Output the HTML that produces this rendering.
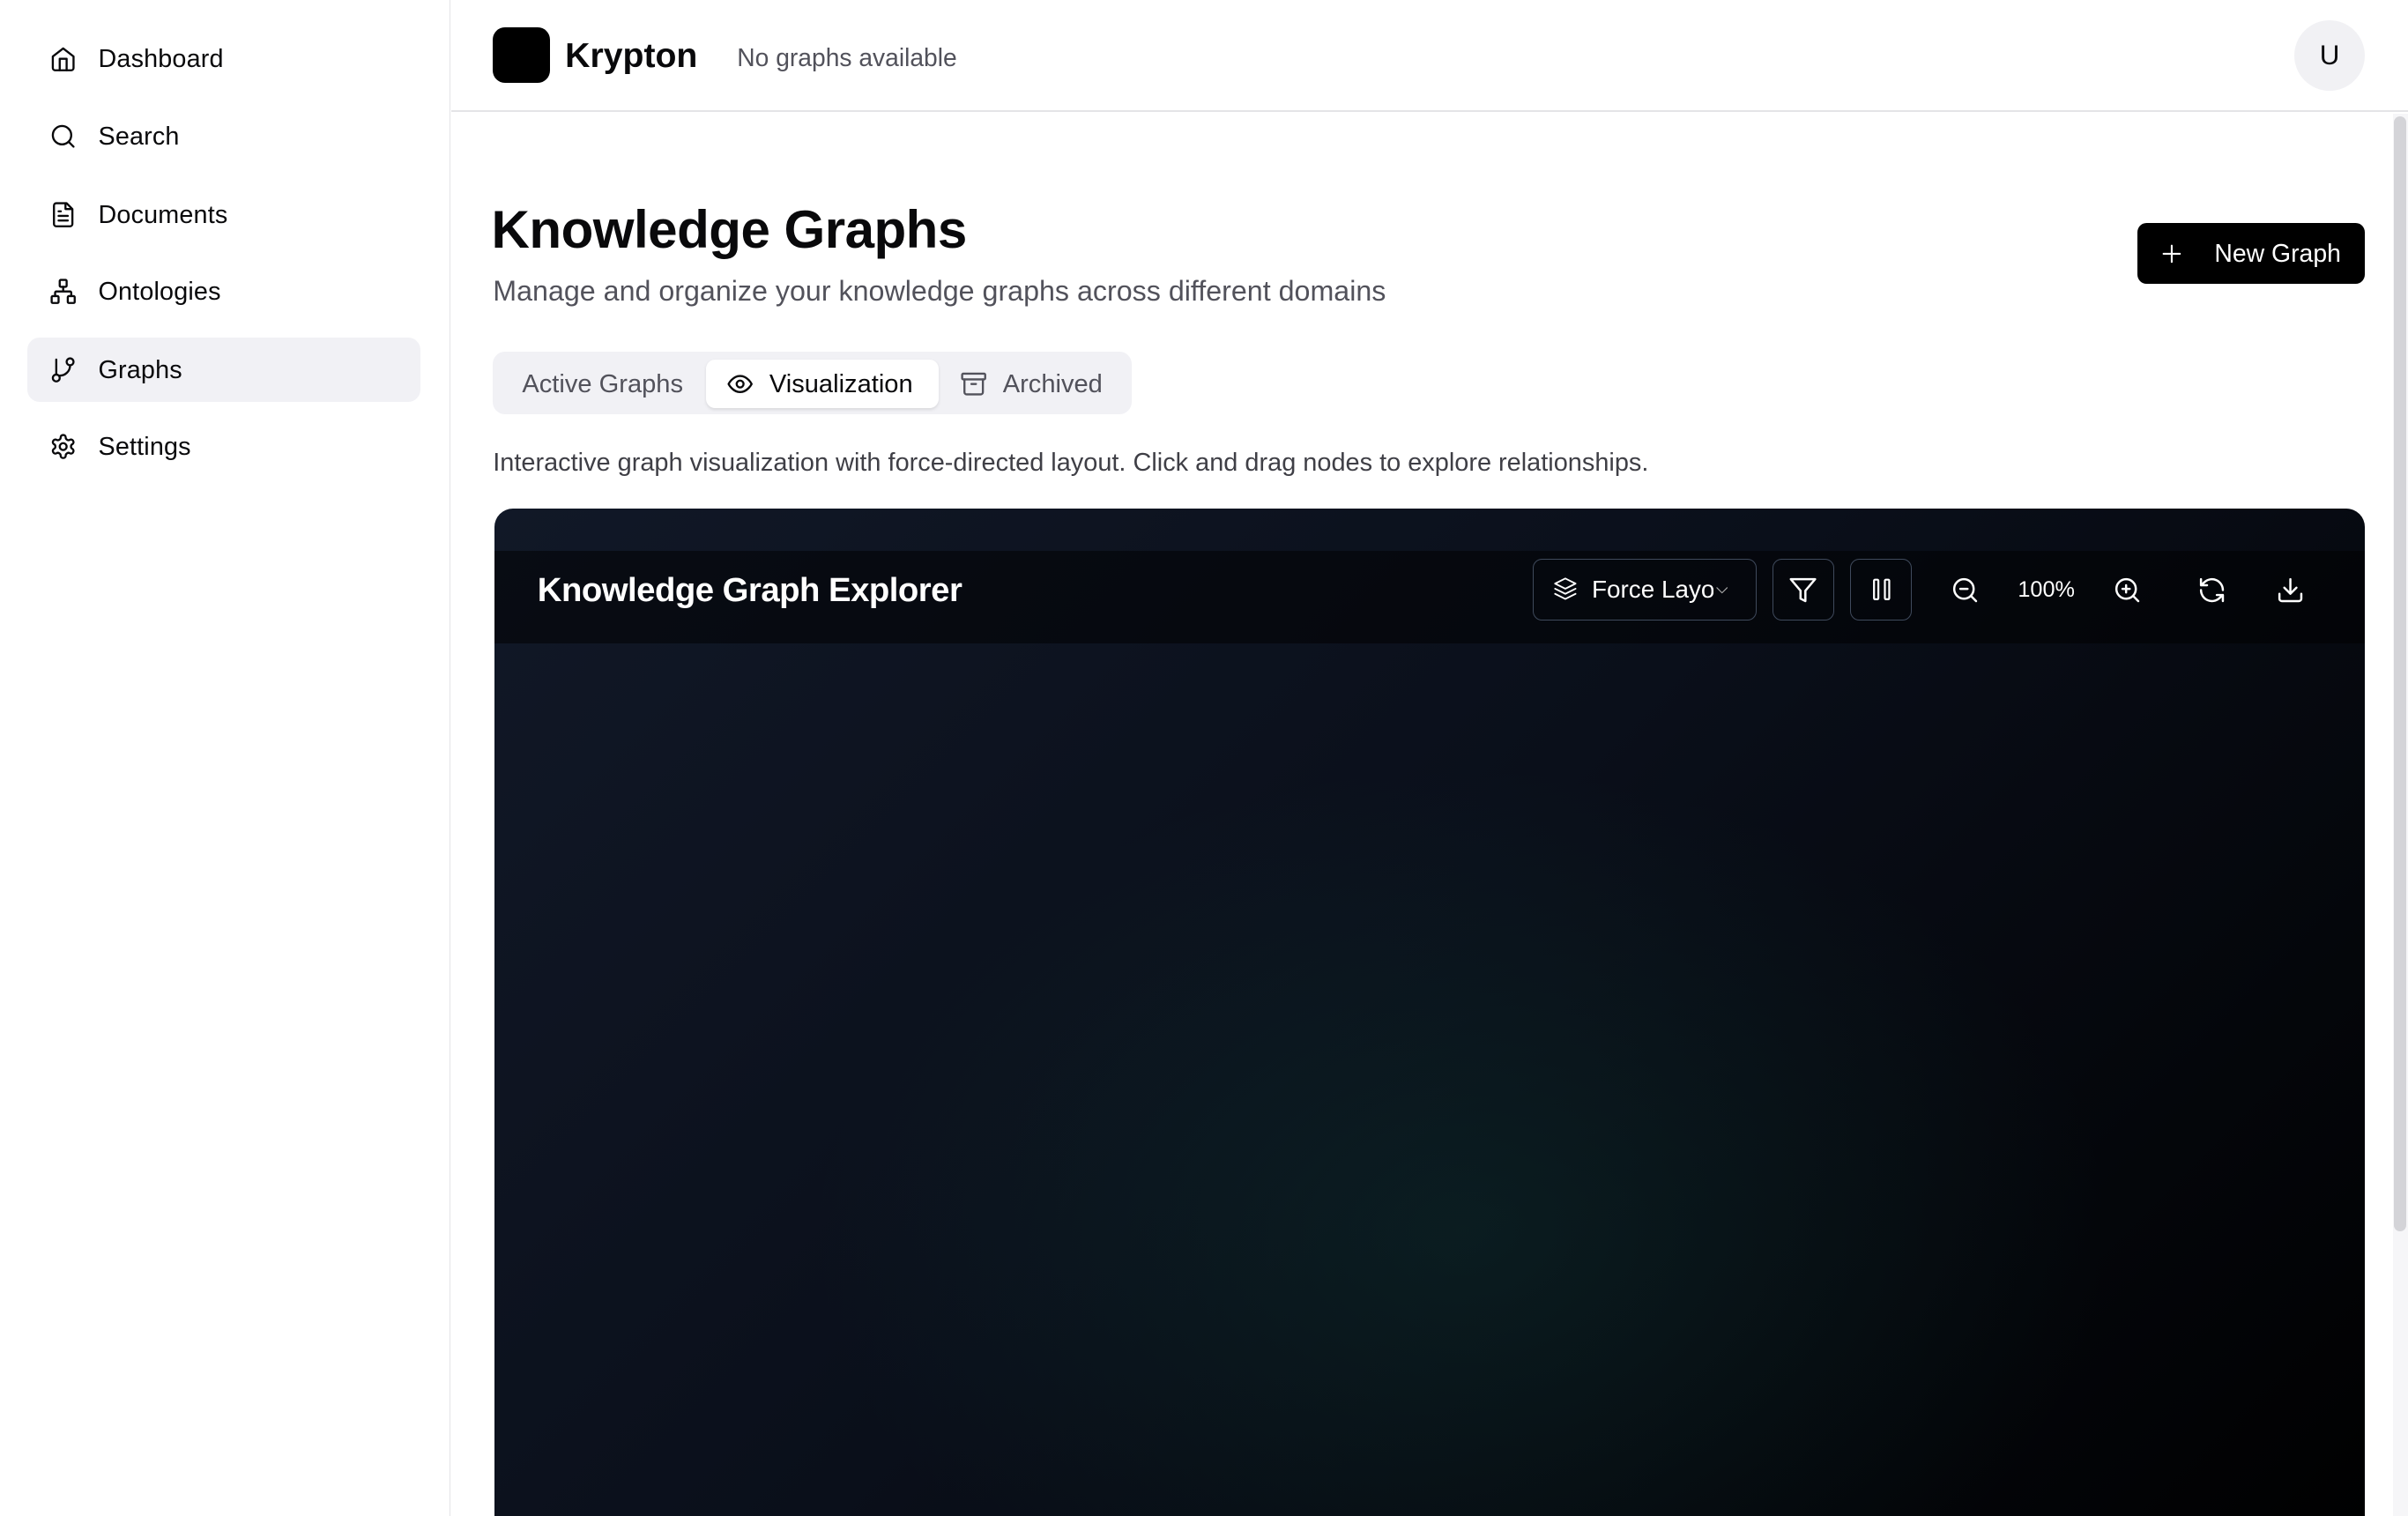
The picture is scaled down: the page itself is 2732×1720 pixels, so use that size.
<!DOCTYPE html>
<html><head><meta charset="utf-8"><style>
html,body{margin:0;padding:0;background:#fff;overflow:hidden}
body{width:2732px;height:1720px}
#r{zoom:1.7423;position:relative;width:1568px;height:987px;font-family:"Liberation Sans",sans-serif;color:#09090b;overflow:hidden}
.a{position:absolute}
.nav{position:absolute;left:18px;width:256px;height:42px;border-radius:8px}
.nav svg{position:absolute;left:14px;top:12px}
.nav span{position:absolute;left:46px;top:12px;font-size:16.5px;font-weight:500;letter-spacing:0.1px}
svg{fill:none;stroke-linecap:round;stroke-linejoin:round}
.ic{stroke:#09090b;stroke-width:1.8}
.w{stroke:#fff;stroke-width:1.8}
.tb{position:absolute;top:364px;height:39px;border:1px solid #3f4a5c;border-radius:6px}
</style></head><body><div id="r">
<div class="a" style="left:0;top:0;width:293px;height:987px;border-right:1px solid #e4e4e7"></div>
<div class="nav" style="top:17px"><svg width="18" height="18" viewBox="0 0 24 24" class="ic"><path d="M3 10l9-7 9 7v10a2 2 0 0 1-2 2H5a2 2 0 0 1-2-2z"/><path d="M9 22V12h6v10"/></svg><span>Dashboard</span></div>
<div class="nav" style="top:68px"><svg width="18" height="18" viewBox="0 0 24 24" class="ic"><circle cx="11" cy="11" r="8"/><path d="M21 21l-4.3-4.3"/></svg><span>Search</span></div>
<div class="nav" style="top:119px"><svg width="18" height="18" viewBox="0 0 24 24" class="ic"><path d="M15 2H6a2 2 0 0 0-2 2v16a2 2 0 0 0 2 2h12a2 2 0 0 0 2-2V7z"/><path d="M14 2v5h5M8 13h8M8 17h8M8 9h2"/></svg><span>Documents</span></div>
<div class="nav" style="top:169px"><svg width="18" height="18" viewBox="0 0 24 24" class="ic"><rect x="9" y="2" width="6" height="6" rx="1"/><rect x="2" y="16" width="6" height="6" rx="1"/><rect x="16" y="16" width="6" height="6" rx="1"/><path d="M5 16v-3a1 1 0 0 1 1-1h12a1 1 0 0 1 1 1v3M12 12V8"/></svg><span>Ontologies</span></div>
<div class="nav" style="top:220px;background:#f1f1f5"><svg width="18" height="18" viewBox="0 0 24 24" class="ic"><circle cx="6" cy="19" r="3"/><circle cx="18" cy="5" r="3"/><path d="M6 3v13M18 8a9 9 0 0 1-9 9"/></svg><span>Graphs</span></div>
<div class="nav" style="top:270px"><svg width="18" height="18" viewBox="0 0 24 24" class="ic"><path d="M12.2 2h-.4a2 2 0 0 0-2 2v.2a2 2 0 0 1-1 1.7l-.4.3a2 2 0 0 1-2 0l-.2-.1a2 2 0 0 0-2.7.7l-.2.4a2 2 0 0 0 .7 2.7l.2.1a2 2 0 0 1 1 1.7v.5a2 2 0 0 1-1 1.7l-.2.1a2 2 0 0 0-.7 2.7l.2.4a2 2 0 0 0 2.7.7l.2-.1a2 2 0 0 1 2 0l.4.3a2 2 0 0 1 1 1.7v.2a2 2 0 0 0 2 2h.4a2 2 0 0 0 2-2v-.2a2 2 0 0 1 1-1.7l.4-.3a2 2 0 0 1 2 0l.2.1a2 2 0 0 0 2.7-.7l.2-.4a2 2 0 0 0-.7-2.7l-.2-.1a2 2 0 0 1-1-1.7v-.5a2 2 0 0 1 1-1.7l.2-.1a2 2 0 0 0 .7-2.7l-.2-.4a2 2 0 0 0-2.7-.7l-.2.1a2 2 0 0 1-2 0l-.4-.3a2 2 0 0 1-1-1.7V4a2 2 0 0 0-2-2z"/><circle cx="12" cy="12" r="3"/></svg><span>Settings</span></div>

<div class="a" style="left:294px;top:72px;width:1274px;height:1px;background:#e4e4e7"></div>
<div class="a" style="left:321px;top:18px;width:37px;height:36px;background:#000;border-radius:8px"></div>
<div class="a" style="left:368px;top:24px;font-size:22.5px;font-weight:600">Krypton</div>
<div class="a" style="left:480px;top:28px;font-size:16.2px;color:#52525b">No graphs available</div>
<div class="a" style="left:1494px;top:13px;width:46px;height:46px;border-radius:50%;background:#f1f1f4;text-align:center;line-height:46px;font-size:18px">U</div>
<div class="a" style="left:1558px;top:74px;width:10px;height:913px;background:#f6f6f8"></div>
<div class="a" style="left:1559px;top:76px;width:8px;height:726px;background:#d4d4d8;border-radius:4px"></div>

<div class="a" style="left:320px;top:130px;font-size:34.5px;font-weight:700;letter-spacing:-0.3px">Knowledge Graphs</div>
<div class="a" style="left:321px;top:179px;font-size:18.5px;color:#52525b">Manage and organize your knowledge graphs across different domains</div>
<div class="a" style="left:1392px;top:145px;width:148px;height:40px;background:#000;border-radius:6px;color:#fff;font-size:16.3px;font-weight:500">
<svg class="a w" style="left:14px;top:12px" width="16" height="16" viewBox="0 0 24 24"><path d="M12 4v16M4 12h16"/></svg><span class="a" style="left:50px;top:11px">New Graph</span></div>

<div class="a" style="left:321px;top:229px;width:416px;height:41px;background:#f1f1f5;border-radius:8px"></div>
<div class="a" style="left:340px;top:241px;font-size:16.7px;color:#52525b;font-weight:500">Active Graphs</div>
<div class="a" style="left:460px;top:234px;width:151px;height:32px;background:#fff;border-radius:6px;box-shadow:0 1px 2px rgba(0,0,0,.1)"></div>
<svg class="a ic" style="left:473px;top:241px" width="18" height="18" viewBox="0 0 24 24"><path d="M2 12s3.5-7 10-7 10 7 10 7-3.5 7-10 7S2 12 2 12z"/><circle cx="12" cy="12" r="3"/></svg>
<div class="a" style="left:501px;top:241px;font-size:16.7px;font-weight:500">Visualization</div>
<svg class="a" style="left:625px;top:241px;stroke:#52525b;stroke-width:1.8" width="18" height="18" viewBox="0 0 24 24"><rect x="2" y="3" width="20" height="5" rx="1"/><path d="M4 8v11a2 2 0 0 0 2 2h12a2 2 0 0 0 2-2V8M10 12h4"/></svg>
<div class="a" style="left:653px;top:241px;font-size:16.7px;color:#52525b;font-weight:500">Archived</div>
<div class="a" style="left:321px;top:292px;font-size:16.6px;color:#3f3f46">Interactive graph visualization with force-directed layout. Click and drag nodes to explore relationships.</div>

<div class="a" style="left:322px;top:331px;width:1218px;height:700px;border-radius:12px;overflow:hidden;background:linear-gradient(135deg,#111827 0%,#0a0f1a 45%,#000 100%)">
<div class="a" style="left:0;top:0;width:100%;height:100%;background:radial-gradient(ellipse 420px 300px at 630px 470px,rgba(16,60,55,.35),rgba(0,0,0,0))"></div>
<div class="a" style="left:0;top:28px;width:100%;height:60px;background:rgba(0,0,0,.5)"></div>
<div class="a" style="left:28px;top:41px;font-size:22px;font-weight:700;color:#fff;letter-spacing:-0.3px">Knowledge Graph Explorer</div>
</div>
<div class="tb" style="left:998px;width:145px"><svg class="a w" style="left:13px;top:11px;stroke-width:1.6" width="16" height="16" viewBox="0 0 24 24"><path d="M12 2l10 5-10 5L2 7z"/><path d="M2 12l10 5 10-5M2 17l10 5 10-5"/></svg><span class="a" style="left:38px;top:10px;color:#fff;font-size:16px;width:79px;overflow:hidden;white-space:nowrap">Force Layout</span><svg class="a" style="left:118px;top:15px;stroke:#aaa;stroke-width:1.5" width="10" height="10" viewBox="0 0 24 24"><path d="M4 8l8 8 8-8"/></svg></div>
<div class="tb" style="left:1154px;width:39px"><svg class="a w" style="left:10px;top:10px" width="19" height="19" viewBox="0 0 24 24"><path d="M22 3H2l8 9.5V19l4 2v-8.5z"/></svg></div>
<div class="tb" style="left:1205px;width:39px"><svg class="a w" style="left:11px;top:11px" width="17" height="17" viewBox="0 0 24 24"><rect x="5" y="3" width="4" height="18" rx="1"/><rect x="15" y="3" width="4" height="18" rx="1"/></svg></div>
<svg class="a w" style="left:1270px;top:375px" width="19" height="19" viewBox="0 0 24 24"><circle cx="11" cy="11" r="8"/><path d="M21 21l-4.3-4.3M8 11h6"/></svg>
<div class="a" style="left:1314px;top:376px;color:#fff;font-size:14.5px;font-weight:500">100%</div>
<svg class="a w" style="left:1376px;top:375px" width="19" height="19" viewBox="0 0 24 24"><circle cx="11" cy="11" r="8"/><path d="M21 21l-4.3-4.3M8 11h6M11 8v6"/></svg>
<svg class="a w" style="left:1431px;top:375px" width="19" height="19" viewBox="0 0 24 24"><path d="M21 12a9 9 0 0 0-15-6.7L3 8M3 3v5h5M3 12a9 9 0 0 0 15 6.7L21 16M21 21v-5h-5"/></svg>
<svg class="a w" style="left:1482px;top:375px" width="19" height="19" viewBox="0 0 24 24"><path d="M21 15v4a2 2 0 0 1-2 2H5a2 2 0 0 1-2-2v-4M7 10l5 5 5-5M12 15V3"/></svg>
</div></body></html>
